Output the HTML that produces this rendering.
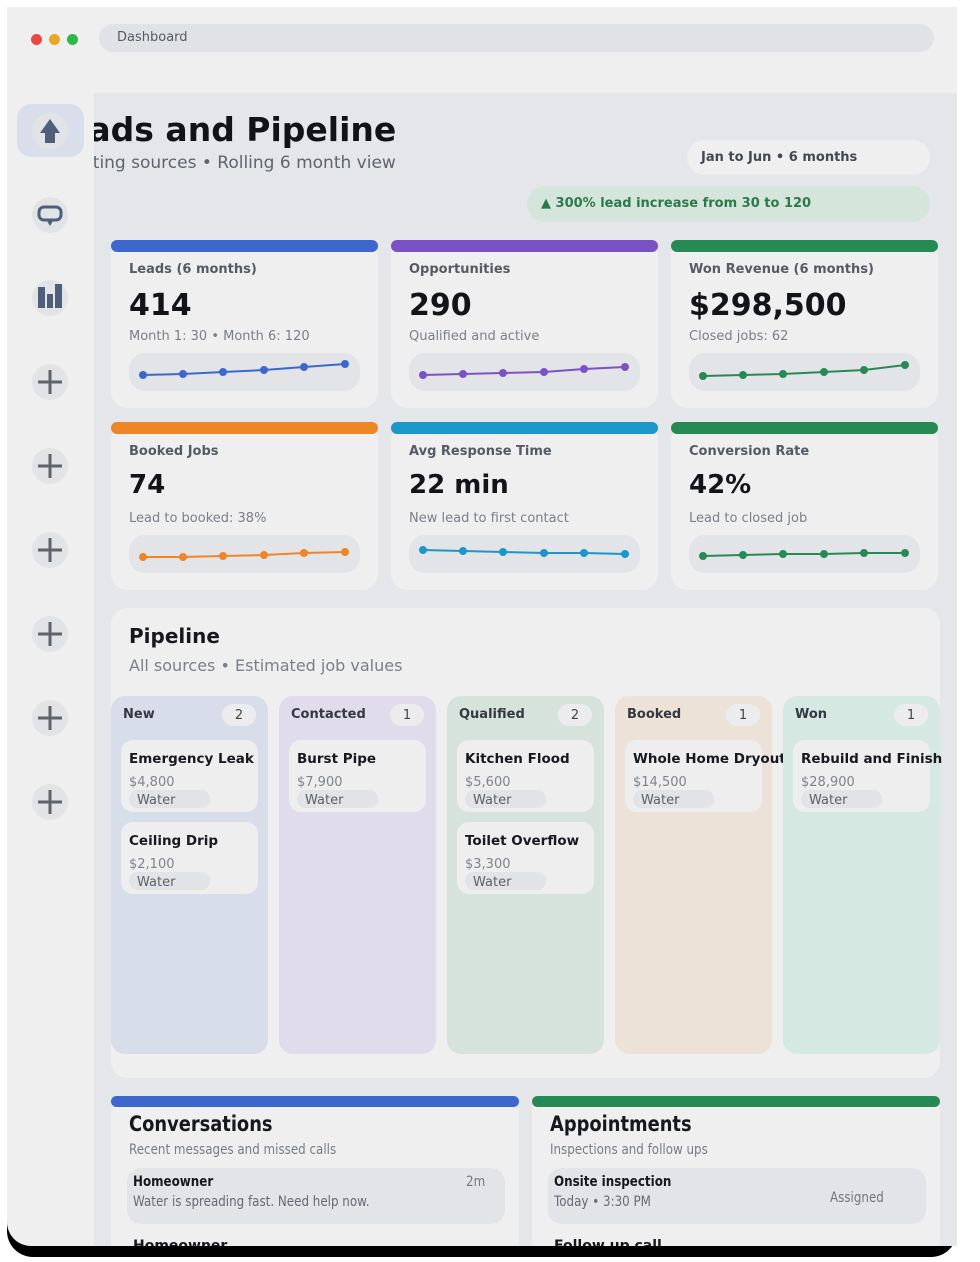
<!DOCTYPE html>
<html><head><meta charset="utf-8"><style>
*{box-sizing:border-box;margin:0;padding:0}
body{width:980px;height:1262px;background:#fff;position:relative;overflow:hidden;font-family:"DejaVu Sans","Liberation Sans",sans-serif;color:#16181d}
.a{position:absolute}
.win{left:7px;top:7px;width:950px;height:1250px;background:#000;border-radius:0 0 26px 26px}
.frame{left:7px;top:7px;width:950px;height:1239px;background:#efefef;border-radius:0 0 24px 24px;overflow:hidden}
.dot{width:11px;height:11px;border-radius:50%;top:34px}
.addr{left:99px;top:24px;width:835px;height:28px;background:#e1e2e6;border-radius:14px;font-size:13px;color:#555a63;padding:6px 0 0 18px}
.main{left:94px;top:93px;width:863px;height:1153px;background:#e5e6ea;overflow:hidden}
.sb{width:36px;height:36px;border-radius:50%;background:#e2e3e6;left:32px}
.card{background:#efefef;border-radius:16px;width:267px;height:168px}
.bar{position:absolute;left:0;top:0;width:100%;height:12px;border-radius:6px}
.lbl{position:absolute;left:18px;top:22px;font-size:13px;font-weight:bold;color:#555a63}
.num{position:absolute;left:18px;top:48px;font-size:30px;font-weight:bold;color:#121419}
.sub{position:absolute;left:18px;top:89px;font-size:13px;color:#7a7f88}
.spk{position:absolute;left:18px;top:113px;width:231px;height:38px;background:#e3e4e8;border-radius:16px}
.col{top:696px;width:157px;height:358px;border-radius:14px}
.ch{position:absolute;left:12px;top:11px;font-size:13px;font-weight:bold;color:#343840}
.cnt{position:absolute;left:111px;top:8px;width:34px;height:22px;border-radius:11px;background:#ececee;font-size:13px;text-align:center;line-height:24px;color:#444}
.it{position:absolute;left:10px;width:137px;height:72px;background:#eeeeef;border-radius:12px}
.it b{position:absolute;left:8px;top:11px;font-size:13.5px;white-space:nowrap;color:#17191e}
.it span{position:absolute;left:8px;top:35px;font-size:13px;color:#7f838b}
.it i{position:absolute;left:8px;top:50px;width:81px;height:18px;border-radius:9px;background:#e2e3e7;font-style:normal;font-size:13px;color:#5d6169;padding-left:8px;line-height:22px}
.bc{background:#efefef;border-radius:16px;top:1096px;height:200px}
.bt{position:absolute;left:18px;top:16px;font-size:21px;font-weight:bold;transform:scaleX(.85);transform-origin:left}
.bs{position:absolute;left:18px;top:46px;font-size:14px;color:#777c84;transform:scaleX(.85);transform-origin:left;white-space:nowrap}
.bi{position:absolute;left:16px;top:72px;height:56px;background:#e3e4e8;border-radius:14px}
.bi b,.bi span,.bi em{position:absolute;font-size:14px;transform:scaleX(.85);transform-origin:left;white-space:nowrap;font-style:normal}
</style></head><body>
<div class="a win"></div>
<div class="a frame"></div>
<div class="a dot" style="left:31px;background:#e84a43"></div>
<div class="a dot" style="left:49px;background:#eaa726"></div>
<div class="a dot" style="left:67px;background:#2db84a"></div>
<div class="a addr">Dashboard</div>

<div class="a main">
 <div class="a" style="left:-49px;top:17px;font-size:33px;font-weight:bold;white-space:nowrap;color:#111318">Leads and Pipeline</div>
 <div class="a" style="left:-53px;top:60px;font-size:17px;color:#5f646c;white-space:nowrap">Marketing sources • Rolling 6 month view</div>
 <div class="a" style="left:593px;top:47px;width:243px;height:35px;border-radius:18px;background:#efefef;font-size:13px;font-weight:bold;color:#444851;padding:10px 0 0 14px">Jan to Jun • 6 months</div>
 <div class="a" style="left:433px;top:93px;width:403px;height:36px;border-radius:18px;background:#d5e5db;font-size:13px;font-weight:bold;color:#2b7a4b;padding:10px 0 0 14px">▲ 300% lead increase from 30 to 120</div>
</div>

<!-- sidebar -->
<div class="a" style="left:17px;top:104px;width:67px;height:53px;border-radius:14px;background:#d8dfeb"></div>
<div class="a sb" style="top:113px"><svg width="36" height="36"><path d="M18 6 L28 20 L23 20 L23 30 L13 30 L13 20 L8 20Z" fill="#4f5f7a"/></svg></div>
<div class="a sb" style="top:197px"><svg width="36" height="36"><rect x="7" y="10" width="22" height="13" rx="5" fill="none" stroke="#4f5f7a" stroke-width="3"/><path d="M15 24 L21 24 L18 29Z" fill="#4f5f7a"/></svg></div>
<div class="a sb" style="top:280px"><svg width="36" height="36"><rect x="6" y="7" width="7" height="21" fill="#4f5f7a"/><rect x="15" y="14" width="6" height="14" fill="#4f5f7a"/><rect x="23" y="4" width="7" height="24" fill="#4f5f7a"/></svg></div>
<svg class="a" style="left:32px;top:364px" width="36" height="456">
 <g stroke="#5f646c" stroke-width="3">
  <path d="M6 18H30M18 6V30"/><path d="M6 102H30M18 90V114"/><path d="M6 186H30M18 174V198"/><path d="M6 270H30M18 258V282"/><path d="M6 354H30M18 342V366"/><path d="M6 438H30M18 426V450"/>
 </g></svg>
<div class="a sb" style="top:364px;background:transparent"></div>
<style>.pc{position:absolute;left:32px;width:36px;height:36px;border-radius:50%;background:#e2e3e6;z-index:-1}</style>
<div class="pc" style="top:364px;z-index:0"></div>
<div class="pc" style="top:448px;z-index:0"></div>
<div class="pc" style="top:532px;z-index:0"></div>
<div class="pc" style="top:616px;z-index:0"></div>
<div class="pc" style="top:700px;z-index:0"></div>
<div class="pc" style="top:784px;z-index:0"></div>
<svg class="a" style="left:32px;top:364px;z-index:1" width="36" height="456">
 <g stroke="#5f646c" stroke-width="3">
  <path d="M6 18H30M18 6V30"/><path d="M6 102H30M18 90V114"/><path d="M6 186H30M18 174V198"/><path d="M6 270H30M18 258V282"/><path d="M6 354H30M18 342V366"/><path d="M6 438H30M18 426V450"/>
 </g></svg>

<!-- KPI cards -->
<div class="a card" style="left:111px;top:240px"><div class="bar" style="background:#3d67cc"></div><div class="lbl">Leads (6 months)</div><div class="num">414</div><div class="sub">Month 1: 30 • Month 6: 120</div><div class="spk"><svg width="231" height="38"><g stroke="#3d67cc" fill="#3d67cc" stroke-width="2"><polyline fill="none" points="14,22 54,21 94,19 135,17 175,14 216,11"/><circle cx="14" cy="22" r="3"/><circle cx="54" cy="21" r="3"/><circle cx="94" cy="19" r="3"/><circle cx="135" cy="17" r="3"/><circle cx="175" cy="14" r="3"/><circle cx="216" cy="11" r="3"/></g></svg></div></div>
<div class="a card" style="left:391px;top:240px"><div class="bar" style="background:#7a52c4"></div><div class="lbl">Opportunities</div><div class="num">290</div><div class="sub">Qualified and active</div><div class="spk"><svg width="231" height="38"><g stroke="#7a52c4" fill="#7a52c4" stroke-width="2"><polyline fill="none" points="14,22 54,21 94,20 135,19 175,16 216,14"/><circle cx="14" cy="22" r="3"/><circle cx="54" cy="21" r="3"/><circle cx="94" cy="20" r="3"/><circle cx="135" cy="19" r="3"/><circle cx="175" cy="16" r="3"/><circle cx="216" cy="14" r="3"/></g></svg></div></div>
<div class="a card" style="left:671px;top:240px"><div class="bar" style="background:#278a55"></div><div class="lbl">Won Revenue (6 months)</div><div class="num">$298,500</div><div class="sub">Closed jobs: 62</div><div class="spk"><svg width="231" height="38"><g stroke="#278a55" fill="#278a55" stroke-width="2"><polyline fill="none" points="14,23 54,22 94,21 135,19 175,17 216,12"/><circle cx="14" cy="23" r="3"/><circle cx="54" cy="22" r="3"/><circle cx="94" cy="21" r="3"/><circle cx="135" cy="19" r="3"/><circle cx="175" cy="17" r="3"/><circle cx="216" cy="12" r="3"/></g></svg></div></div>

<div class="a card" style="left:111px;top:422px"><div class="bar" style="background:#ee8628"></div><div class="lbl">Booked Jobs</div><div class="num" style="top:48px;font-size:26px">74</div><div class="sub">Lead to booked: 38%</div><div class="spk"><svg width="231" height="38"><g stroke="#ee8628" fill="#ee8628" stroke-width="2"><polyline fill="none" points="14,22 54,22 94,21 135,20 175,18 216,17"/><circle cx="14" cy="22" r="3"/><circle cx="54" cy="22" r="3"/><circle cx="94" cy="21" r="3"/><circle cx="135" cy="20" r="3"/><circle cx="175" cy="18" r="3"/><circle cx="216" cy="17" r="3"/></g></svg></div></div>
<div class="a card" style="left:391px;top:422px"><div class="bar" style="background:#1b97c8"></div><div class="lbl">Avg Response Time</div><div class="num" style="top:48px;font-size:26px">22 min</div><div class="sub">New lead to first contact</div><div class="spk"><svg width="231" height="38"><g stroke="#1b97c8" fill="#1b97c8" stroke-width="2"><polyline fill="none" points="14,15 54,16 94,17 135,18 175,18 216,19"/><circle cx="14" cy="15" r="3"/><circle cx="54" cy="16" r="3"/><circle cx="94" cy="17" r="3"/><circle cx="135" cy="18" r="3"/><circle cx="175" cy="18" r="3"/><circle cx="216" cy="19" r="3"/></g></svg></div></div>
<div class="a card" style="left:671px;top:422px"><div class="bar" style="background:#278a55"></div><div class="lbl">Conversion Rate</div><div class="num" style="top:48px;font-size:26px">42%</div><div class="sub">Lead to closed job</div><div class="spk"><svg width="231" height="38"><g stroke="#278a55" fill="#278a55" stroke-width="2"><polyline fill="none" points="14,21 54,20 94,19 135,19 175,18 216,18"/><circle cx="14" cy="21" r="3"/><circle cx="54" cy="20" r="3"/><circle cx="94" cy="19" r="3"/><circle cx="135" cy="19" r="3"/><circle cx="175" cy="18" r="3"/><circle cx="216" cy="18" r="3"/></g></svg></div></div>

<!-- Pipeline -->
<div class="a" style="left:111px;top:608px;width:829px;height:470px;background:#efefef;border-radius:16px"></div>
<div class="a" style="left:129px;top:624px;font-size:20px;font-weight:bold">Pipeline</div>
<div class="a" style="left:129px;top:656px;font-size:16px;color:#7a7f88">All sources • Estimated job values</div>

<div class="a col" style="left:111px;background:#d7dde9"><div class="ch">New</div><div class="cnt">2</div>
 <div class="it" style="top:44px"><b>Emergency Leak</b><span>$4,800</span><i>Water</i></div>
 <div class="it" style="top:126px"><b>Ceiling Drip</b><span>$2,100</span><i>Water</i></div></div>
<div class="a col" style="left:279px;background:#e0dcec"><div class="ch">Contacted</div><div class="cnt">1</div>
 <div class="it" style="top:44px"><b>Burst Pipe</b><span>$7,900</span><i>Water</i></div></div>
<div class="a col" style="left:447px;background:#d6e2dc"><div class="ch">Qualified</div><div class="cnt">2</div>
 <div class="it" style="top:44px"><b>Kitchen Flood</b><span>$5,600</span><i>Water</i></div>
 <div class="it" style="top:126px"><b>Toilet Overflow</b><span>$3,300</span><i>Water</i></div></div>
<div class="a col" style="left:615px;background:#ede2d7"><div class="ch">Booked</div><div class="cnt">1</div>
 <div class="it" style="top:44px"><b>Whole Home Dryout</b><span>$14,500</span><i>Water</i></div></div>
<div class="a col" style="left:783px;background:#d5e8e2"><div class="ch">Won</div><div class="cnt">1</div>
 <div class="it" style="top:44px"><b>Rebuild and Finish</b><span>$28,900</span><i>Water</i></div></div>

<!-- bottom -->
<div class="a" style="left:94px;top:1092px;width:863px;height:154px;overflow:hidden">
 <div class="a bc" style="left:17px;top:4px;width:408px"><div class="bar" style="background:#3d67cc;height:11px"></div><div class="bt">Conversations</div><div class="bs">Recent messages and missed calls</div>
  <div class="bi" style="width:378px"><b style="left:6px;top:6px">Homeowner</b><span style="left:339px;top:6px;color:#777">2m</span><span style="left:6px;top:26px;color:#666a72">Water is spreading fast. Need help now.</span></div>
  <b style="position:absolute;left:22px;top:142px;font-size:14px">Homeowner</b></div>
 <div class="a bc" style="left:438px;top:4px;width:408px"><div class="bar" style="background:#278a55;height:11px"></div><div class="bt">Appointments</div><div class="bs">Inspections and follow ups</div>
  <div class="bi" style="width:378px"><b style="left:6px;top:6px">Onsite inspection</b><span style="left:6px;top:26px;color:#666a72">Today • 3:30 PM</span><span style="left:282px;top:22px;color:#777">Assigned</span></div>
  <b style="position:absolute;left:22px;top:142px;font-size:14px">Follow up call</b></div>
</div>
</body></html>
